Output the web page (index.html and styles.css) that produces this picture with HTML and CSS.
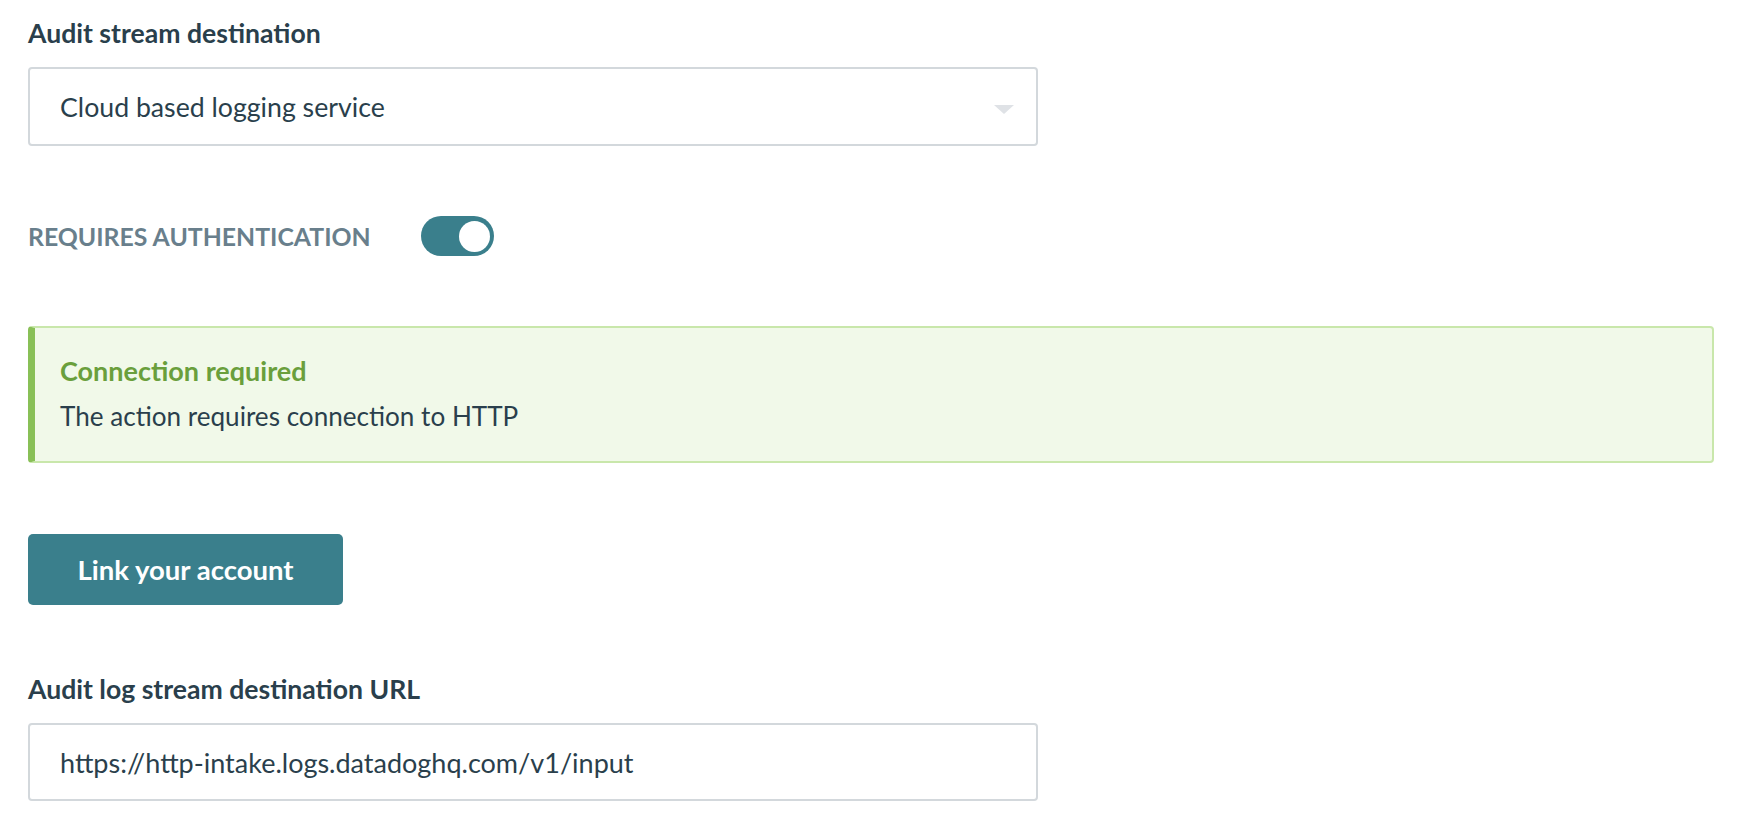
FILE: index.html
```html
<!DOCTYPE html>
<html lang="en">
<head>
<meta charset="utf-8">
<title>Audit stream</title>
<link rel="stylesheet" href="styles.css">
</head>
<body>
<main class="page">
  <h2 class="field-label first">Audit stream destination</h2>
  <div class="select">
    <span class="select-value">Cloud based logging service</span>
    <span class="select-caret"></span>
  </div>

  <div class="auth-row">
    <span class="auth-label">REQUIRES AUTHENTICATION</span>
    <span class="toggle"><span class="toggle-knob"></span></span>
  </div>

  <div class="alert">
    <div class="alert-title">Connection required</div>
    <div class="alert-body">The action requires connection to HTTP</div>
  </div>

  <button class="btn">Link your account</button>

  <h2 class="field-label url-label">Audit log stream destination URL</h2>
  <div class="input">https://http-intake.logs.datadoghq.com/v1/input</div>
</main>
</body>
</html>
```

FILE: styles.css
```css
* { box-sizing: border-box; }
html, body { margin: 0; padding: 0; background: #ffffff; }
body {
  font-family: Lato, "Open Sans", sans-serif;
  color: #2a3f4c;
}
.page {
  padding: 18px 28px 0 28px;
  display: flex;
  flex-direction: column;
  align-items: flex-start;
}
.field-label {
  margin: 0;
  font-size: 26.6px;
  line-height: 30px;
  font-weight: 700;
  color: #2a3f4c;
}
.select {
  margin-top: 19px;
  width: 1010px;
  height: 79px;
  border: 2px solid #d3d8dc;
  border-radius: 4px;
  display: flex;
  align-items: center;
  justify-content: space-between;
  padding: 0 22px 0 30px;
  background: #fff;
}
.select-value {
  font-size: 26.7px;
  color: #2a3f4c;
}
.select-caret {
  width: 0;
  height: 0;
  border-left: 10px solid transparent;
  border-right: 10px solid transparent;
  border-top: 9px solid #dfe2e6;
  margin-top: 6px;
}
.auth-row {
  margin-top: 70px;
  display: flex;
  align-items: center;
  gap: 50px;
}
.auth-label {
  font-size: 24.8px;
  font-weight: 700;
  color: #697f8c;
}
.toggle {
  width: 73px;
  height: 40px;
  border-radius: 20px;
  background: #3a7f8c;
  display: flex;
  align-items: center;
  justify-content: flex-end;
  padding: 0 4px;
}
.toggle-knob {
  width: 31px;
  height: 31px;
  border-radius: 50%;
  background: #ffffff;
}
.alert {
  margin-top: 70px;
  width: 1686px;
  background: #f1f9e9;
  border: 2px solid #c9e7ab;
  border-left: 7px solid #89c057;
  border-radius: 4px;
  padding: 28px 24px 30px 25px;
}
.alert-title {
  font-size: 27px;
  line-height: 30px;
  font-weight: 700;
  color: #6a9f3c;
}
.alert-body {
  margin-top: 15px;
  font-size: 26.1px;
  line-height: 30px;
  color: #2a3f4c;
}
.btn {
  margin-top: 71px;
  width: 315px;
  height: 71px;
  border: none;
  border-radius: 5px;
  background: #3a7f8c;
  color: #ffffff;
  font-family: Lato, "Open Sans", sans-serif;
  font-size: 27.5px;
  font-weight: 700;
  padding: 0;
}
.url-label {
  margin-top: 69px;
}
.input {
  margin-top: 19px;
  width: 1010px;
  height: 78px;
  border: 2px solid #d3d8dc;
  border-radius: 4px;
  display: flex;
  align-items: center;
  padding: 0 30px;
  font-size: 27px;
  color: #2a3f4c;
}
```
